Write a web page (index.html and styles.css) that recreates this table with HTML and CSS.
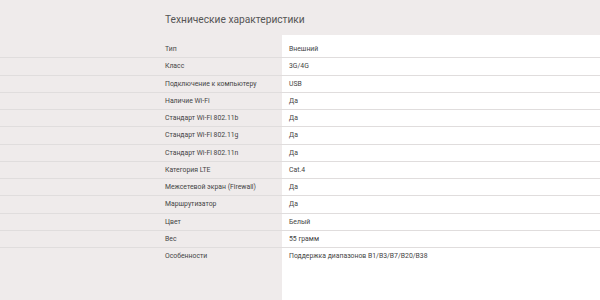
FILE: index.html
```html
<!DOCTYPE html>
<html lang="ru">
<head>
<meta charset="utf-8">
<link rel="stylesheet" href="styles.css">
</head>
<body>
<div class="page">
  <h1 class="title">Технические характеристики</h1>
  <div class="specs">
    <div class="row"><div class="label">Тип</div><div class="value">Внешний</div></div>
    <div class="row"><div class="label">Класс</div><div class="value">3G/4G</div></div>
    <div class="row"><div class="label">Подключение к компьютеру</div><div class="value">USB</div></div>
    <div class="row"><div class="label">Наличие Wi-Fi</div><div class="value">Да</div></div>
    <div class="row"><div class="label">Стандарт Wi-Fi 802.11b</div><div class="value">Да</div></div>
    <div class="row"><div class="label">Стандарт Wi-Fi 802.11g</div><div class="value">Да</div></div>
    <div class="row"><div class="label">Стандарт Wi-Fi 802.11n</div><div class="value">Да</div></div>
    <div class="row"><div class="label">Категория LTE</div><div class="value">Cat.4</div></div>
    <div class="row"><div class="label">Межсетевой экран (Firewall)</div><div class="value">Да</div></div>
    <div class="row"><div class="label">Маршрутизатор</div><div class="value">Да</div></div>
    <div class="row"><div class="label">Цвет</div><div class="value">Белый</div></div>
    <div class="row"><div class="label">Вес</div><div class="value">55 грамм</div></div>
    <div class="row"><div class="label">Особенности</div><div class="value">Поддержка диапазонов B1/B3/B7/B20/B38</div></div>
  </div>
</div>
</body>
</html>
```
FILE: styles.css
```css
html, body {
  margin: 0;
  padding: 0;
  height: 100%;
}
body {
  background: #efebeb;
  font-family: Roboto, "Noto Sans", sans-serif;
  color: #555;
}
.page {
  display: flex;
  flex-direction: column;
  height: 100%;
}
.title {
  margin: 0;
  height: 35px;
  box-sizing: border-box;
  padding: 13px 0 0 165px;
  font-size: 10.2px;
  font-weight: 400;
  line-height: 14px;
  color: #555;
}
.specs {
  flex: 1;
  padding-top: 5px;
  background: linear-gradient(to right, transparent 282px, #fff 282px);
}
.row {
  display: flex;
  height: 17.25px;
  box-sizing: border-box;
  align-items: center;
  font-size: 6.85px;
  color: #444;
}
.row + .row {
  border-top: 1px solid #e0dddd;
}
.label {
  width: 282px;
  box-sizing: border-box;
  padding-left: 165px;
}
.value {
  padding-left: 7px;
}
```
